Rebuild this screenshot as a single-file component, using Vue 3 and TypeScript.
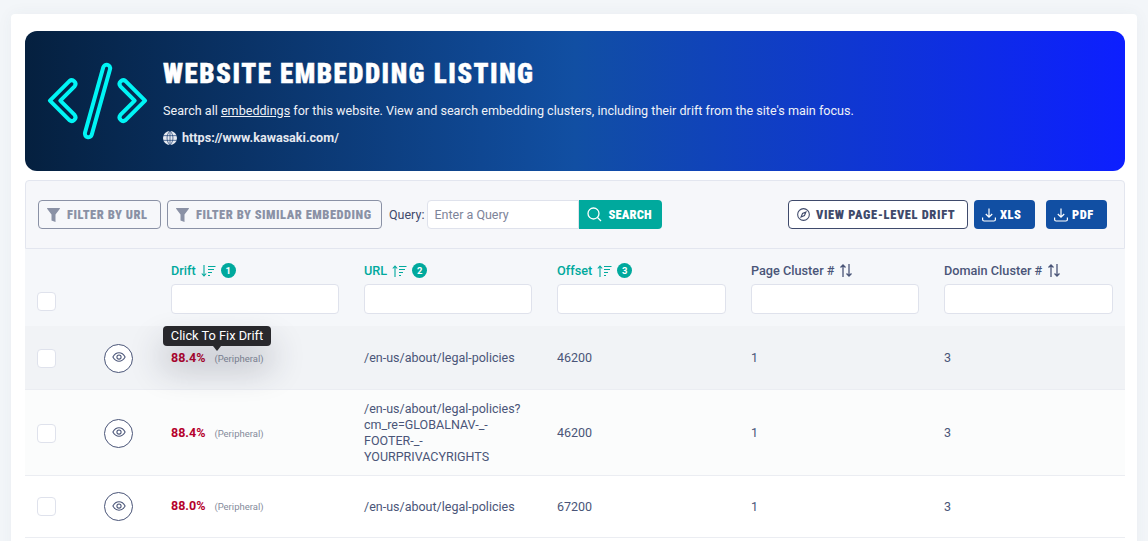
<template>
  <div class="page">
    <div class="card">
      <header class="hero">
        <svg class="hero-icon" width="104" height="80" viewBox="0 0 104 80" fill="none" stroke="#00f5f5" stroke-width="4" stroke-linejoin="round">
          <path d="M4.900 39.600 24.400 20.100A3.700 3.700 0 0 1 29.600 25.300L15.300 39.600 29.600 53.900A3.700 3.700 0 0 1 24.400 59.100Z" />
          <path d="M100.100 39.600 80.600 20.100A3.700 3.700 0 0 0 75.400 25.300L89.700 39.600 75.400 53.900A3.700 3.700 0 0 0 80.600 59.100Z" />
          <rect x="-3.500" y="-37.500" width="7" height="75" rx="3.500" transform="translate(52.500 40) rotate(15.600)" />
        </svg>
        <div class="hero-text">
          <h1>WEBSITE EMBEDDING LISTING</h1>
          <p class="hero-desc">Search all <u>embeddings</u> for this website. View and search embedding clusters, including their drift from the site's main focus.</p>
          <p class="hero-url">
            <svg width="14" height="14" viewBox="0 0 16 16" fill="#e6e9f0">
              <circle cx="8" cy="8" r="8" />
              <path d="M0 5.300h16M0 10.700h16M8 0v16M8 0C3.500 4 3.500 12 8 16M8 0c4.500 4 4.500 12 0 16" stroke="#1a3f73" stroke-width=".8" fill="none" />
            </svg>
            https://www.kawasaki.com/
          </p>
        </div>
      </header>

      <section class="toolbar">
        <button class="btn btn-filter">
          <svg width="13" height="14" viewBox="0 0 13 14" fill="#8a91a5"><path d="M.5 0h12a.5.5 0 0 1 .4.800L8.500 6.500V14l-4-1.500v-6L.1.800A.5.5 0 0 1 .5 0z" /></svg>
          FILTER BY URL
        </button>
        <button class="btn btn-filter">
          <svg width="13" height="14" viewBox="0 0 13 14" fill="#8a91a5"><path d="M.5 0h12a.5.5 0 0 1 .4.800L8.500 6.500V14l-4-1.500v-6L.1.800A.5.5 0 0 1 .5 0z" /></svg>
          FILTER BY SIMILAR EMBEDDING
        </button>
        <label class="query-label">Query:</label>
        <input class="query-input" placeholder="Enter a Query" />
        <button class="btn btn-search">
          <svg width="15" height="15" viewBox="0 0 15 15" fill="none" stroke="#fff" stroke-width="1.300"><circle cx="6.500" cy="6.500" r="5.500" /><path d="M10.500 10.500 14 14" /></svg>
          SEARCH
        </button>
        <button class="btn btn-drift">
          <svg width="13" height="13" viewBox="0 0 16 16" fill="none" stroke="#3f4a6b" stroke-width="1.300"><circle cx="8" cy="8" r="7.200" /><path d="M11 5 9.200 9.200 5 11l1.800-4.200z" /></svg>
          VIEW PAGE-LEVEL DRIFT
        </button>
        <button class="btn btn-export">
          <svg class="dl" width="14" height="14" viewBox="0 0 14 14" fill="none" stroke="#fff" stroke-width="1.200"><path d="M7 .5v8.500M3.800 6 7 9.200 10.200 6M.6 9.500v2a1.500 1.500 0 0 0 1.500 1.500h9.800a1.500 1.500 0 0 0 1.500-1.500v-2" /></svg>
          XLS
        </button>
        <button class="btn btn-export">
          <svg class="dl" width="14" height="14" viewBox="0 0 14 14" fill="none" stroke="#fff" stroke-width="1.200"><path d="M7 .5v8.500M3.800 6 7 9.200 10.200 6M.6 9.500v2a1.500 1.500 0 0 0 1.500 1.500h9.800a1.500 1.500 0 0 0 1.500-1.500v-2" /></svg>
          PDF
        </button>
      </section>

      <div class="table-head grid">
        <span class="check"></span>
        <span></span>
        <div v-for="col in columns" :key="col.label" class="head-cell">
          <div class="head-title" :class="{ sorted: col.rank }">
            {{ col.label }}
            <svg v-if="col.rank" width="15" height="12" viewBox="0 0 15 12" fill="none" stroke="#00a99d" stroke-width="1.100">
              <path v-if="col.down" d="M3 0v11M.8 8.500 3 11l2.200-2.500" />
              <path v-else d="M3 12V1M.8 3.500 3 1l2.200 2.500" />
              <path d="M7 1.500h7.500M7 4.500h6M7 7.500h4M7 10.500h2" />
            </svg>
            <svg v-else width="14" height="13" viewBox="0 0 14 13" fill="none" stroke="#4a5578" stroke-width="1.300">
              <path d="M4 13V1M1.500 3.500 4 1l2.500 2.500M10 0v12M7.500 9.500 10 12l2.500-2.500" />
            </svg>
            <span v-if="col.rank" class="rank">{{ col.rank }}</span>
          </div>
          <input class="head-input" />
        </div>
      </div>

      <div
        v-for="(row, i) in rows"
        :key="i"
        class="row grid"
        :class="{ hovered: i === 0, soft: i === 1 }"
      >
        <span class="check"></span>
        <span class="eye">
          <svg width="14" height="14" viewBox="0 0 16 16" fill="none" stroke="#4a5578" stroke-width="1.200">
            <path d="M1 8c1.800-3.200 4.200-4.800 7-4.800s5.200 1.600 7 4.800c-1.800 3.200-4.200 4.800-7 4.800S2.800 11.200 1 8z" />
            <circle cx="8" cy="8" r="2.400" />
          </svg>
        </span>
        <div class="drift">
          <span class="pct">{{ row.drift }}</span>
          <span class="tag">(Peripheral)</span>
          <div v-if="i === 0" class="tooltip">Click To Fix Drift</div>
        </div>
        <div class="url">{{ row.url }}</div>
        <div>{{ row.offset }}</div>
        <div>{{ row.page }}</div>
        <div>{{ row.domain }}</div>
      </div>
    </div>
  </div>
</template>

<script setup lang="ts">
interface Column {
  label: string
  rank?: number
  down?: boolean
}

const columns: Column[] = [
  { label: 'Drift', rank: 1, down: true },
  { label: 'URL', rank: 2 },
  { label: 'Offset', rank: 3 },
  { label: 'Page Cluster #' },
  { label: 'Domain Cluster #' },
]

const rows = [
  { drift: '88.4%', url: '/en-us/about/legal-policies', offset: 46200, page: 1, domain: 3 },
  { drift: '88.4%', url: '/en-us/about/legal-policies?cm_re=GLOBALNAV-_-FOOTER-_-YOURPRIVACYRIGHTS', offset: 46200, page: 1, domain: 3 },
  { drift: '88.0%', url: '/en-us/about/legal-policies', offset: 67200, page: 1, domain: 3 },
]
</script>

<style>
html,
body {
  margin: 0;
  height: 541px;
  overflow: hidden;
  background: #f3f6f9;
}
</style>

<style scoped>
.page {
  height: 541px;
  overflow: hidden;
  padding: 14px 11px 0;
  box-sizing: border-box;
  font-family: Roboto, "Liberation Sans", sans-serif;
  color: #4a5578;
  font-size: 12.500px;
}

.card {
  background: #fff;
  border-radius: 4px 4px 0 0;
  padding: 17px 12px 40px 14px;
  box-shadow: 0 0 16px rgba(60, 70, 100, 0.05);
}

.hero {
  height: 140px;
  box-sizing: border-box;
  border-radius: 12px;
  display: flex;
  align-items: center;
  background: linear-gradient(90deg, #05203f 0%, #114fa3 50%, #0d1fff 100%);
  padding-left: 20px;
  color: #fff;
}

.hero-icon {
  flex: none;
  margin-right: 14px;
}

.hero-text {
  align-self: flex-start;
  padding-top: 30px;
}

h1 {
  margin: 0 0 15px;
  font-weight: 900;
  font-size: 27px;
  line-height: 26px;
  font-stretch: 75%;
  letter-spacing: 1.500px;
  -webkit-text-stroke: 0.4px #fff;
  white-space: nowrap;
}

.hero-desc {
  margin: 0 0 9px;
  font-size: 12.600px;
  line-height: 18px;
  color: #eef1f7;
}

.hero-url {
  margin: 0;
  display: flex;
  align-items: center;
  gap: 5px;
  font-size: 12.600px;
  font-weight: 700;
  line-height: 18px;
  color: #e6e9f0;
}

.toolbar {
  margin-top: 9px;
  height: 69px;
  box-sizing: border-box;
  display: flex;
  align-items: center;
  padding: 0 17px 0 12px;
  background: #f6f7fa;
  border: 1px solid #e3e6ef;
  border-radius: 4px 4px 0 0;
}

.btn {
  height: 29px;
  box-sizing: border-box;
  display: flex;
  align-items: center;
  gap: 6px;
  padding: 0 0 0 8px;
  border-radius: 4px;
  font-family: Roboto, sans-serif;
  font-weight: 900;
  font-size: 12.500px;
  font-stretch: 85%;
  letter-spacing: 0.500px;
  white-space: nowrap;
}

.btn-filter {
  width: 123px;
  margin-right: 6px;
  gap: 7px;
  background: #f6f7fa;
  color: #8a91a5;
  border: 1px solid #8a91a5;
}

.btn-filter + .btn-filter {
  width: 215px;
  margin-right: 7px;
}

.query-label {
  font-size: 12.500px;
  margin-right: 3px;
  color: #3f4a6b;
}

.query-input {
  width: 152px;
  height: 29px;
  box-sizing: border-box;
  padding: 0 6px;
  background: #fff;
  border: 1px solid #dfe2ec;
  border-radius: 4px 0 0 4px;
  font-family: inherit;
  font-size: 12.500px;
  outline: none;
}

.query-input::placeholder {
  color: #7d8499;
  opacity: 1;
}

.btn-search {
  width: 83px;
  background: #00a99d;
  color: #fff;
  border: 0;
  border-radius: 0 4px 4px 0;
  margin-right: auto;
  letter-spacing: 0.150px;
}

.btn-drift {
  width: 180px;
  background: #fff;
  color: #3f4a6b;
  border: 1px solid #3f4a6b;
  margin-right: 6px;
  letter-spacing: 0.620px;
}

.btn-export {
  width: 61px;
  gap: 4px;
  background: #114fa3;
  color: #fff;
  border: 0;
}

.btn-export + .btn-export {
  margin-left: 11px;
}

.grid {
  display: grid;
  grid-template-columns: 67px 67px 193px 193px 194px 193px 1fr;
  padding: 0 12px;
  align-items: center;
}

.table-head {
  height: 77px;
  box-sizing: border-box;
  padding-top: 12px;
  background: #f5f7fa;
  align-items: start;
}

.table-head > .check {
  margin-top: 31px;
}

.check {
  width: 19px;
  height: 19px;
  box-sizing: border-box;
  background: #fff;
  border: 1px solid #dfe2ec;
  border-radius: 4px;
}

.head-cell {
  display: flex;
  flex-direction: column;
  gap: 4px;
}

.head-title {
  display: flex;
  align-items: center;
  gap: 5px;
  height: 19px;
  font-size: 12.700px;
  font-weight: 500;
  color: #4a5578;
}

.head-title.sorted {
  color: #00a99d;
}

.rank {
  width: 15px;
  height: 15px;
  border-radius: 50%;
  display: flex;
  align-items: center;
  justify-content: center;
  background: #00a99d;
  color: #fff;
  font-size: 9.500px;
  font-weight: 700;
}

.head-input {
  width: 168px;
  height: 30px;
  box-sizing: border-box;
  background: #fff;
  border: 1px solid #dfe2ec;
  border-radius: 4px;
  outline: none;
}

.head-cell:nth-child(5) .head-input,
.head-cell:last-child .head-input {
  width: 169px;
}

.row {
  min-height: 61px;
  border-bottom: 1px solid #ebedf2;
  line-height: 16px;
}

.row.hovered {
  min-height: 62px;
  padding-top: 1px;
  background: #f1f3f6;
}

.row.soft {
  background: #fbfcfc;
  padding-top: 11px;
  padding-bottom: 10px;
}

.eye {
  width: 29px;
  height: 29px;
  box-sizing: border-box;
  display: flex;
  align-items: center;
  justify-content: center;
  background: #fff;
  border: 1px solid #4a5578;
  border-radius: 50%;
}

.eye svg {
  margin-bottom: 2px;
}

.drift {
  position: relative;
  display: flex;
  align-items: baseline;
  gap: 9px;
}

.pct {
  font-size: 12.500px;
  font-weight: 700;
  color: #b5002c;
}

.tag {
  font-size: 9.500px;
  color: #858b9b;
}

.tooltip {
  position: absolute;
  left: -8px;
  top: -24px;
  width: 108px;
  height: 20px;
  border-radius: 4px;
  background: #28282c;
  color: #fff;
  font-size: 12.800px;
  line-height: 20px;
  text-align: center;
  box-shadow: 0 20px 34px rgba(40, 45, 65, 0.32);
}

.tooltip::after {
  content: "";
  position: absolute;
  left: 50px;
  top: 20px;
  border: 4px solid transparent;
  border-bottom: 0;
  border-top: 5px solid #28282c;
}

.url {
  width: 165px;
  overflow-wrap: anywhere;
}
</style>
